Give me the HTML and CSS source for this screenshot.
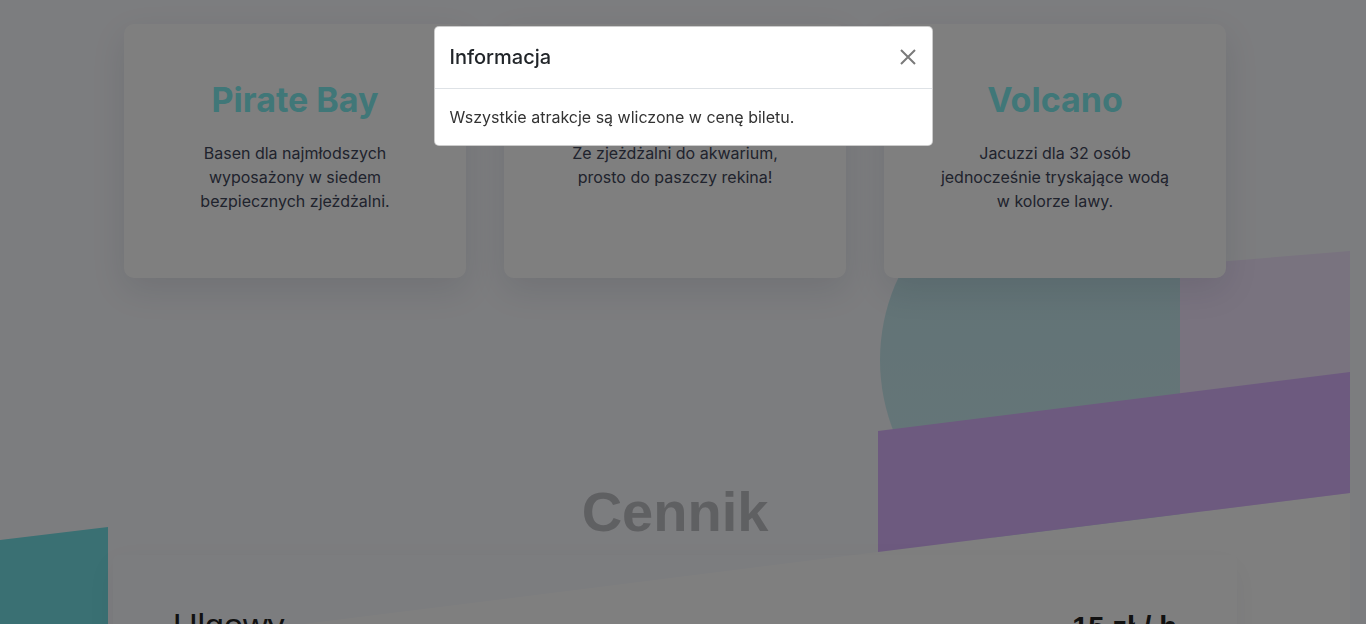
FILE: index.html
```html
<!DOCTYPE html>
<html lang="pl">
<head>
<meta charset="utf-8">
<title>Aquapark</title>
<link rel="stylesheet" href="styles.css">
</head>
<body>
<div class="page">
  <div class="deco deco-circle"></div>
  <div class="deco deco-lilac"></div>
  <div class="deco deco-white"></div>
  <div class="deco deco-band"></div>
  <div class="deco deco-teal"></div>

  <section class="attractions">
    <article class="card">
      <h3 class="card-title">Pirate Bay</h3>
      <p class="card-text">Basen dla najmłodszych wyposażony w siedem bezpiecznych zjeżdżalni.</p>
    </article>
    <article class="card">
      <h3 class="card-title">Shark Tube</h3>
      <p class="card-text">Ze zjeżdżalni do akwarium, prosto do paszczy rekina!</p>
    </article>
    <article class="card">
      <h3 class="card-title">Volcano</h3>
      <p class="card-text">Jacuzzi dla 32 osób jednocześnie tryskające wodą w kolorze lawy.</p>
    </article>
  </section>

  <section class="pricing">
    <h2 class="pricing-title">Cennik</h2>
    <div class="price-card">
      <div class="price-row">
        <span class="price-name">Ulgowy</span>
        <span class="price-value">15 zł / h</span>
      </div>
    </div>
  </section>
</div>

<div class="backdrop"></div>

<div class="modal">
  <div class="modal-dialog">
    <div class="modal-header">
      <h5 class="modal-title">Informacja</h5>
      <button class="btn-close" type="button" aria-label="Zamknij">
        <svg width="16" height="16" viewBox="0 0 16 16"><path d="M1 1 L15 15 M15 1 L1 15" stroke="#7a7a7a" stroke-width="2" fill="none"/></svg>
      </button>
    </div>
    <div class="modal-body">Wszystkie atrakcje są wliczone w cenę biletu.</div>
  </div>
</div>
</body>
</html>
```

FILE: styles.css
```css
* { box-sizing: border-box; }

html, body {
  margin: 0;
  height: 100%;
}

body {
  background: #f9fafe;
  font-family: Inter, "Noto Sans", sans-serif;
  color: #212529;
  overflow: hidden;
}

.page {
  position: relative;
  width: 1350px;
  height: 624px;
  overflow: hidden;
  background: #f9fafe;
}

.deco {
  position: absolute;
  z-index: 0;
}

.deco-circle {
  left: 880px;
  top: 165px;
  width: 390px;
  height: 390px;
  border-radius: 50%;
  background: linear-gradient(180deg, #c2e4ea 0%, #cdeef3 100%);
  clip-path: inset(0 90px 0 0);
}

.deco-lilac {
  left: 1180px;
  top: 251px;
  width: 170px;
  height: 260px;
  background: #f2e6fe;
  clip-path: polygon(0 14px, 100% 0, 100% 100%, 0 100%);
}

.deco-white {
  left: 0;
  top: 493px;
  width: 1350px;
  height: 200px;
  background: #ffffff;
  clip-path: polygon(0 169px, 100% 0, 100% 100%, 0 100%);
}

.deco-band {
  left: 878px;
  top: 372px;
  width: 472px;
  height: 181px;
  background: #dab4fe;
  clip-path: polygon(0 59px, 100% 0, 100% 121px, 0 180px);
}

.deco-teal {
  left: 0;
  top: 527px;
  width: 108px;
  height: 120px;
  background: #74e0e6;
  clip-path: polygon(0 13px, 100% 0, 100% 100%, 0 100%);
}

.attractions {
  position: relative;
  z-index: 1;
  display: grid;
  grid-template-columns: repeat(3, 342px);
  justify-content: center;
  gap: 38px;
  padding-top: 24px;
}

.card {
  height: 254px;
  background: #ffffff;
  border-radius: 10px;
  box-shadow: 0 12px 34px rgba(20, 30, 60, 0.10);
  padding: 57px 48px 0;
  text-align: center;
}

.card-title {
  margin: 0 0 22px;
  font-size: 34px;
  line-height: 38px;
  font-weight: 700;
  color: #80eef0;
}

.card-text {
  margin: 0 auto;
  max-width: 244px;
  font-size: 16px;
  line-height: 24px;
  color: #41465a;
}

.pricing {
  position: relative;
  z-index: 1;
  margin-top: 200px;
  font-family: "Liberation Sans", Arial, sans-serif;
}

.pricing-title {
  margin: 0;
  text-align: center;
  font-size: 56px;
  line-height: 67px;
  font-weight: 700;
  color: #bfc0c5;
}

.price-card {
  width: 1124px;
  margin: 10px auto 0;
  padding: 50px 60px;
  border-radius: 6px;
  box-shadow: 0 10px 30px rgba(20, 30, 60, 0.05);
}

.price-row {
  display: flex;
  justify-content: space-between;
  align-items: baseline;
}

.price-name {
  font-size: 34px;
  line-height: 40px;
  color: #222;
}

.price-value {
  font-size: 29px;
  line-height: 40px;
  font-weight: 700;
  color: #222;
}

.backdrop {
  position: fixed;
  inset: 0;
  z-index: 10;
  background: rgba(0, 0, 0, 0.5);
}

.modal {
  position: fixed;
  inset: 0;
  z-index: 20;
}

.modal-dialog {
  width: 499px;
  margin: 26px auto 0;
  background: #ffffff;
  border: 1px solid rgba(0, 0, 0, 0.2);
  border-radius: 5px;
  overflow: hidden;
}

.modal-header {
  display: flex;
  align-items: center;
  justify-content: space-between;
  padding: 15px 14px 16px 15px;
  border-bottom: 1px solid #dee2e6;
}

.modal-title {
  margin: 0;
  font-size: 20px;
  line-height: 30px;
  font-weight: 500;
  color: #212529;
}

.btn-close {
  display: flex;
  align-items: center;
  justify-content: center;
  width: 20px;
  height: 20px;
  padding: 0;
  border: 0;
  background: transparent;
  cursor: pointer;
}

.modal-body {
  padding: 16px 15px;
  font-size: 16px;
  line-height: 24px;
  color: #333;
}
```
